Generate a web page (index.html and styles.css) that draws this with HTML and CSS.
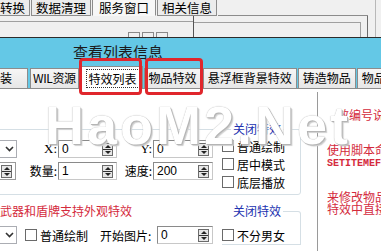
FILE: index.html
```html
<!DOCTYPE html>
<html lang="zh-CN">
<head>
    <meta charset="UTF-8">
    <meta name="viewport" content="width=device-width, initial-scale=1.0">
    <title>查看列表信息</title>
    <link rel="stylesheet" href="styles.css">
</head>
<body>
    <div class="top">
        <div class="top-main">
            <div class="top-tabs">
                <span class="ttab first">转换</span>
                <span class="ttab">数据清理</span>
                <span class="ttab active">服务窗口</span>
                <span class="ttab">相关信息</span>
                <span class="ttab-fill"></span>
            </div>
            <div class="top-page">
                <div class="top-left">
                    <div class="win-btns"><i></i><i></i><i></i></div>
                </div>
                <div class="top-right"></div>
            </div>
        </div>
        <div class="top-side"></div>
    </div>

    <div class="caption">查看列表信息</div>

    <div class="tabs">
        <span class="tab cut">装</span>
        <span class="tab narrow">WIL资源</span>
        <span class="tab active mark-a"><span class="focus">特效列表</span></span>
        <span class="tab mark-b">物品特效</span>
        <span class="tab">悬浮框背景特效</span>
        <span class="tab">铸造物品</span>
        <span class="tab">物品</span>
    </div>

    <div class="content">
        <div class="left">
            <fieldset class="group">
                <legend>关闭特效</legend>
                <div class="group-body">
                    <div class="fields">
                        <span class="combo"><svg width="9" height="6" viewBox="0 0 9 6"><path d="M1 1l3.5 3.5L8 1" fill="none" stroke="#333" stroke-width="1.6"/></svg></span>
                        <span class="lbl latin">X:</span>
                        <span class="field">0<span class="spin"></span></span>
                        <span class="lbl latin">Y:</span>
                        <span class="field">0<span class="spin"></span></span>

                        <span class="stub"><span class="spin"></span></span>
                        <span class="lbl">数量:</span>
                        <span class="field">1<span class="spin"></span></span>
                        <span class="lbl">速度:</span>
                        <span class="field">200<span class="spin"></span></span>
                    </div>
                    <div class="checks">
                        <label class="check"><i></i>普通绘制</label>
                        <label class="check"><i></i>居中模式</label>
                        <label class="check"><i></i>底层播放</label>
                    </div>
                </div>
            </fieldset>

            <div class="lower">
                <div class="lower-left">
                    <div class="warn">武器和盾牌支持外观特效</div>
                    <div class="row">
                        <span class="combo"><svg width="9" height="6" viewBox="0 0 9 6"><path d="M1 1l3.5 3.5L8 1" fill="none" stroke="#333" stroke-width="1.6"/></svg></span>
                        <label class="check spaced"><i></i>普通绘制</label>
                        <span class="lbl-inline">开始图片:</span>
                        <span class="field short">0<span class="spin"></span></span>
                    </div>
                </div>
                <fieldset class="group2">
                    <legend>关闭特效</legend>
                    <label class="check"><i></i>不分男女</label>
                </fieldset>
            </div>
        </div>

        <div class="right">
            <div class="note n1">效编号说明</div>
            <div class="note n2">使用脚本命令</div>
            <div class="note n3">SETITEMEFFECT</div>
            <div class="note n4">来修改物品的</div>
            <div class="note n5">特效中直接修改</div>
        </div>
    </div>

    <div class="watermark">HaoM2.Net</div>
</body>
</html>
```

FILE: styles.css
```css
* {
    box-sizing: border-box;
}

body {
    margin: 0;
    width: 381px;
    height: 251px;
    overflow: hidden;
    position: relative;
    background-color: #f0f0f0;
    font-family: "Noto Sans CJK SC", "Liberation Sans", sans-serif;
    font-size: 12px;
    color: #000;
}

/* top strip of the main window */
.top {
    display: flex;
    height: 37px;
}

.top-main {
    width: 368px;
}

.top-side {
    flex: 1;
    margin-left: 7px;
    border-left: 1px solid #b8b8b8;
}

.top-tabs {
    display: flex;
    height: 16px;
}

.ttab {
    padding: 0 4px;
    font-size: 12.5px;
    line-height: 15px;
    border: 1px solid #8c8c8c;
    border-top: none;
    margin-right: 1px;
    background-color: #ececec;
}

.ttab.first {
    padding-left: 0;
    border-left: none;
}

.ttab.active {
    padding: 0 6px;
    background-color: #f7f7f7;
    border-bottom-color: #f7f7f7;
}

.ttab-fill {
    flex: 1;
    border-bottom: 1px solid #8c8c8c;
}

.top-page {
    display: flex;
    height: 21px;
    border-right: 1px solid #6d6d6d;
}

.top-left {
    width: 194px;
    padding-top: 5px;
    border-right: 1px solid #555;
}

.top-left .win-btns {
    display: flex;
    align-items: flex-end;
    height: 16px;
    padding-left: 128px;
    border-top: 1px solid #a0a0a0;
}

.win-btns i {
    width: 12px;
    height: 5px;
    margin-right: 2px;
    border: 1px solid #8a8a8a;
    border-bottom: none;
}

.top-right {
    flex: 1;
    margin: 6px 6px 0 0;
    border-top: 1px solid #a0a0a0;
    border-right: 1px solid #a0a0a0;
}

/* blue caption */
.caption {
    height: 29px;
    padding: 4px 0 0 73px;
    border-top: 1px solid #2c2c2c;
    background-color: #64c8e6;
    font-size: 15px;
    line-height: 20px;
    color: #1b1b1b;
    overflow: hidden;
}

.tabs {
    display: flex;
    align-items: flex-end;
    height: 23px;
    background-color: #64c8e6;
    border-bottom: 1px solid #8c8c8c;
}

.tab {
    position: relative;
    height: 20px;
    padding: 0 4px;
    margin-right: 1px;
    font-size: 12px;
    line-height: 18px;
    white-space: nowrap;
    border: 1px solid #8c8c8c;
    border-bottom: none;
    background: linear-gradient(#f6f6f6, #e6e6e6);
}

.tab.cut {
    padding: 0 15px 0 0;
    border-left: none;
    margin-right: 2px;
}

.tab.narrow {
    padding: 0 2px;
    letter-spacing: -0.4px;
}

.tab.active {
    height: 23px;
    margin: 0 1px -1px 1px;
    padding: 2px 2px 0 4px;
    background: #fff;
}

.focus {
    display: block;
    padding: 0 2px;
    line-height: 17px;
    border: 1px dotted #333;
}

.mark-a::after,
.mark-b::after {
    content: "";
    position: absolute;
    border: 3px solid #e0262c;
    border-radius: 4px;
}

.mark-a::after {
    left: -3px;
    right: 0;
    top: -9px;
    bottom: -6px;
}

.mark-b::after {
    left: 0;
    right: -2px;
    top: -11px;
    bottom: -7px;
}

/* page body */
.content {
    display: flex;
    height: 162px;
    background-color: #fff;
}

.left {
    width: 317px;
    padding-top: 32px;
}

.group {
    width: 311px;
    min-width: 0;
    margin: 0 0 0 -10px;
    padding: 0 0 3px 9px;
    border: 1px solid #d5dfe5;
    border-radius: 3px;
}

.group legend,
.group2 legend {
    padding: 0 2px;
    line-height: 16px;
    color: #2232b0;
}

.group legend {
    margin-left: 231px;
}

.group-body {
    display: flex;
}

.fields {
    display: grid;
    grid-template-columns: 17px 41px 59px 36px 60px;
    grid-auto-rows: 18px;
    row-gap: 4px;
    padding-top: 3px;
    align-items: center;
}

.lbl {
    text-align: right;
    padding-right: 1px;
    line-height: 18px;
}

.latin {
    font-family: "Liberation Serif", serif;
    font-size: 13px;
}

.combo {
    display: flex;
    align-items: center;
    justify-content: flex-end;
    width: 17px;
    height: 18px;
    padding-right: 2px;
    border: 1px solid #abadb3;
    border-left: none;
    background-color: #fff;
}

.stub {
    display: flex;
    align-items: center;
    justify-content: flex-end;
    width: 16px;
    height: 18px;
    padding-right: 3px;
    border: 1px solid #9a9a9a;
    border-left: none;
}

.field {
    display: flex;
    align-items: center;
    justify-content: space-between;
    height: 18px;
    padding: 0 3px 0 3px;
    border: 1px solid;
    border-color: #8a8a8a #c8c8c8 #c8c8c8 #8a8a8a;
    background-color: #fff;
    font-family: "Liberation Sans", sans-serif;
    font-size: 12px;
}

.spin {
    display: flex;
    flex-direction: column;
    align-items: center;
    justify-content: space-between;
    width: 11px;
    height: 13px;
    padding: 1px 0;
    border: 1px solid #6b6b6b;
    background: linear-gradient(#e6e6e6 5px, #333 5px, #333 6px, #e6e6e6 6px);
}

.spin::before {
    content: "";
    border: 3px solid transparent;
    border-top: none;
    border-bottom: 3px solid #222;
}

.spin::after {
    content: "";
    border: 3px solid transparent;
    border-bottom: none;
    border-top: 3px solid #222;
}

.checks {
    margin-left: 9px;
}

.check {
    display: flex;
    align-items: center;
    gap: 3px;
    height: 18px;
    white-space: nowrap;
}

.check i {
    width: 12px;
    height: 12px;
    border: 1px solid #6a6a6a;
    background-color: #fff;
}

.lower {
    display: flex;
    margin-top: 8px;
}

.lower-left {
    width: 222px;
}

.warn {
    line-height: 16px;
    color: #d42a3c;
}

.row {
    display: flex;
    align-items: center;
    height: 18px;
    margin-top: 7px;
}

.check.spaced {
    margin-left: 8px;
}

.lbl-inline {
    margin-left: 12px;
}

.field.short {
    width: 56px;
    margin: 0 9px 0 auto;
}

.group2 {
    width: 79px;
    min-width: 0;
    margin: 0;
    padding: 7px 0 0 0;
    border: 1px solid #d5dfe5;
    border-left: none;
    border-radius: 0 3px 0 0;
}

.group2 legend {
    margin: 0;
    padding: 0 2px 0 11px;
}

.right {
    flex: 1;
    margin-top: 3px;
    padding-left: 9px;
    border-left: 1px solid #9a9a9a;
    overflow: hidden;
    white-space: nowrap;
    color: #d42a3c;
}

.note {
    line-height: 14px;
}

.n1 {
    margin-top: 16px;
    padding-left: 10px;
}

.n2 {
    margin-top: 21px;
}

.n3 {
    font-family: "Liberation Mono", monospace;
    font-size: 10px;
    font-weight: bold;
}

.n4 {
    margin-top: 20px;
    line-height: 12px;
}

.n5 {
    line-height: 12px;
}

/* site watermark over the screenshot */
.watermark {
    position: absolute;
    left: 45px;
    top: 98px;
    font-family: "Liberation Sans", sans-serif;
    font-size: 54px;
    font-weight: bold;
    line-height: 54px;
    letter-spacing: 3px;
    color: #fff;
    text-shadow: 0 0 1px #9a9a9a, 1px 1px 0 #b8b8b8, 2px 2px 1px #d0d0d0;
    pointer-events: none;
}
```
